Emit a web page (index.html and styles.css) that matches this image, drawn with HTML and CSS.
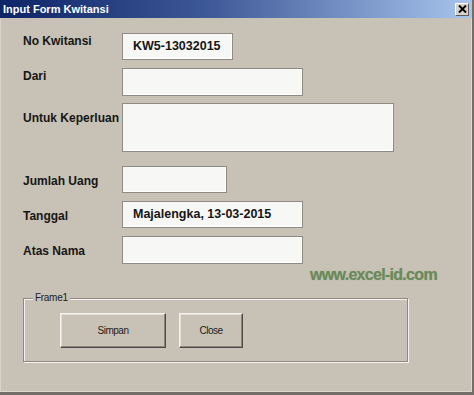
FILE: index.html
```html
<!DOCTYPE html>
<html lang="id">
<head>
  <meta charset="UTF-8">
  <title>Input Form Kwitansi</title>
  <link rel="stylesheet" href="styles.css">
</head>
<body>
<div class="window">
  <!-- title bar -->
  <div class="titlebar">
    <span class="title">Input Form Kwitansi</span>
    <span class="close-x">
      <svg width="9" height="8" viewBox="0 0 9 8">
        <path d="M1,0.5 L8,7.5 M8,0.5 L1,7.5" stroke="#000" stroke-width="2"></path>
      </svg>
    </span>
  </div>

  <div class="form-body">
    <div class="row row-1">
      <div class="label">No Kwitansi</div>
      <div class="field f-no">KW5-13032015</div>
    </div>
    <div class="row row-2">
      <div class="label">Dari</div>
      <div class="field f-dari"></div>
    </div>
    <div class="row row-3">
      <div class="label lbl-low">Untuk Keperluan</div>
      <div class="field f-keperluan"></div>
    </div>
    <div class="row row-4">
      <div class="label lbl-low">Jumlah Uang</div>
      <div class="field f-jumlah"></div>
    </div>
    <div class="row row-5">
      <div class="label lbl-low">Tanggal</div>
      <div class="field f-tanggal">Majalengka, 13-03-2015</div>
    </div>
    <div class="row row-6">
      <div class="label lbl-low">Atas Nama</div>
      <div class="field f-atas"></div>
    </div>

    <div class="watermark">www.excel-id.com</div>

    <!-- Frame1 -->
    <div class="frame">
      <span class="frame-label">Frame1</span>
      <div class="btn btn-simpan">Simpan</div>
      <div class="btn btn-close">Close</div>
    </div>
  </div>
</div>
</body>
</html>
```

FILE: styles.css
```css
body {
  margin: 0;
  background: #c8c1b5;
  font-family: "Liberation Sans", Arial, sans-serif;
}
.window {
  width: 474px;
  height: 395px;
  box-sizing: border-box;
  display: flex;
  flex-direction: column;
  background: #c8c1b5;
  border-right: 2px solid #736f68;
  border-bottom: 3px solid #736f68;
  box-shadow: inset -1px -1px 0 #ddd8cf, inset 1px 0 0 #d8d2c8;
}
/* title bar */
.titlebar {
  height: 18px;
  display: flex;
  align-items: center;
  justify-content: space-between;
  padding: 0 3px 0 3px;
  background: linear-gradient(to right, #0d2467, #3f5a98 45%, #a8c5ee);
}
.title {
  color: #fff;
  font-size: 11px;
  font-weight: bold;
  line-height: 14px;
}
.close-x {
  width: 14px;
  height: 13px;
  box-sizing: border-box;
  display: flex;
  align-items: center;
  justify-content: center;
  background: #d6d2ca;
  border: 1px solid;
  border-color: #fff #5f5b55 #5f5b55 #fff;
}
/* form rows */
.form-body {
  flex: 1;
  padding-left: 23px;
}
.row {
  display: flex;
  align-items: flex-start;
}
.row-1 { margin-top: 15px; }
.row-2 { margin-top: 8px; }
.row-3 { margin-top: 7px; }
.row-4 { margin-top: 14px; }
.row-5 { margin-top: 8px; }
.row-6 { margin-top: 8px; }
.label {
  width: 99px;
  padding-top: 1px;
  font-size: 12px;
  line-height: 14px;
  font-weight: bold;
  color: #161616;
  white-space: nowrap;
}
.lbl-low {
  padding-top: 8px;
}
.field {
  box-sizing: border-box;
  height: 27px;
  padding: 4px 0 0 10px;
  background: #f7f7f6;
  border: 1px solid #8f8b84;
  box-shadow: inset -1px -1px 0 #fff;
  font-size: 12.5px;
  line-height: 16px;
  font-weight: bold;
  color: #151515;
  white-space: nowrap;
}
.f-no { width: 111px; }
.f-dari { width: 181px; height: 28px; }
.f-keperluan { width: 272px; height: 49px; }
.f-jumlah { width: 105px; }
.f-tanggal { width: 181px; }
.f-atas { width: 181px; height: 28px; }

.watermark {
  margin: 3px 0 0 287px;
  font-size: 16px;
  line-height: 16px;
  font-weight: bold;
  letter-spacing: -0.7px;
  color: #6b895b;
  text-shadow: 0 0 1px #8da47d;
}
/* frame with buttons */
.frame {
  position: relative;
  margin-top: 15px;
  width: 385px;
  height: 64px;
  box-sizing: border-box;
  display: flex;
  align-items: flex-start;
  gap: 13px;
  padding: 14px 0 0 36px;
  border: 1px solid #8e8a83;
  box-shadow: inset 1px 1px 0 #f6f4f0, 1px 1px 0 #f6f4f0;
}
.frame-label {
  position: absolute;
  top: -7px;
  left: 9px;
  padding: 0 2px;
  background: #c8c1b5;
  font-size: 10px;
  line-height: 12px;
  letter-spacing: -0.3px;
  color: #222;
}
.btn {
  height: 35px;
  box-sizing: border-box;
  display: flex;
  align-items: center;
  justify-content: center;
  border: 1px solid;
  border-color: #f5f3ef #4d4943 #4d4943 #f5f3ef;
  box-shadow: inset -1px -1px 0 #8a857d, inset 1px 1px 0 #e2ded6;
  font-size: 10px;
  letter-spacing: -0.5px;
  color: #222;
}
.btn-simpan { width: 106px; }
.btn-close { width: 64px; }
```
